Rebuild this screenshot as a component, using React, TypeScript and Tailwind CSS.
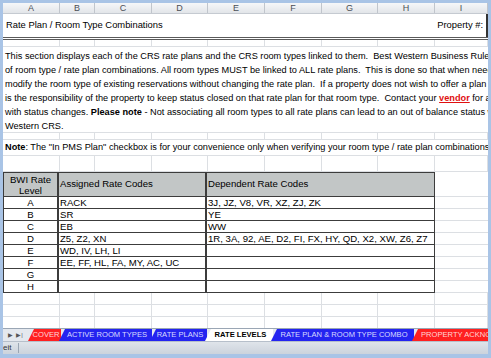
import React from 'react';

const cols = [57, 35, 57, 56, 57, 57, 56, 57, 53];
const letters = ['A', 'B', 'C', 'D', 'E', 'F', 'G', 'H', 'I'];

// one empty spreadsheet row with light gridlines
const BlankRow = ({ h }: { h: string }) => (
  <div className={`flex ${h} border-b border-[#dcdfe3]`}>
    {cols.map((w, i) => (
      <div key={i} style={{ width: w }} className="shrink-0 border-r border-[#dcdfe3]" />
    ))}
  </div>
);

const levels: [string, string, string][] = [
  ['A', 'RACK', '3J, JZ, V8, VR, XZ, ZJ, ZK'],
  ['B', 'SR', 'YE'],
  ['C', 'EB', 'WW'],
  ['D', 'Z5, Z2, XN', '1R, 3A, 92, AE, D2, FI, FX, HY, QD, X2, XW, Z6, Z7'],
  ['E', 'WD, IV, LH, LI', ''],
  ['F', 'EE, FF, HL, FA, MY, AC, UC', ''],
  ['G', '', ''],
  ['H', '', ''],
];

const tabs = [
  { label: 'COVER', cls: 'w-[33px] bg-[#ff2020] text-[#ffd6d6] justify-center' },
  { label: 'ACTIVE ROOM TYPES', cls: 'w-[93px] bg-[#2424f0] text-[#d8dcff] justify-center' },
  { label: 'RATE PLANS', cls: 'w-[57px] bg-[#2424f0] text-[#d8dcff] justify-center' },
  { label: 'RATE LEVELS', cls: 'w-[68px] bg-white text-black font-bold justify-center' },
  { label: 'RATE PLAN & ROOM TYPE COMBO', cls: 'w-[143px] bg-[#2424f0] text-[#d8dcff] justify-center' },
  { label: 'PROPERTY ACKNOWLEDGEMENT', cls: 'w-[80px] bg-[#ff2020] text-[#ffd6d6] justify-start pl-[6px]' },
];

const App = () => {
  return (
    <div className="w-[491px] h-[358px] bg-[#a9c4e6] pt-[3px] pl-[3px] pr-[3px] pb-[4px] font-['Liberation_Sans',Arial,sans-serif] text-black overflow-hidden">
      <div className="w-[485px] h-[351px] bg-white flex flex-col overflow-hidden">
        {/* column headers */}
        <div className="flex h-[11px] shrink-0 bg-gradient-to-b from-[#f6f7f9] to-[#e2e5e9] border-b border-[#c5cad1]">
          {cols.map((w, i) => (
            <div
              key={i}
              style={{ width: w }}
              className="shrink-0 border-r border-[#c0c5cc] flex items-center justify-center text-[9px] leading-none text-[#4a4f56]"
            >
              {letters[i]}
            </div>
          ))}
        </div>

        {/* title row */}
        <div className="flex h-[26px] shrink-0 border-b-[3px] border-double border-[#5a5a5a]">
          <div className="flex-1 flex items-center justify-between pl-[3px] pr-[3px] text-[9.4px] border-r-2 border-[#333]">
            <span>Rate Plan / Room Type Combinations</span>
            <span>Property #:</span>
          </div>
        </div>

        <BlankRow h="h-[7px]" />

        {/* description */}
        <div className="h-[86px] shrink-0 border-b border-[#dcdfe3] pl-[2px] pt-[2px] text-[9.2px] leading-[14px] whitespace-nowrap overflow-hidden">
          <div>This section displays each of the CRS rate plans and the CRS room types linked to them.&nbsp; Best Western Business Rules require a full matrix</div>
          <div>of room type / rate plan combinations. All room types MUST be linked to ALL rate plans.&nbsp; This is done so that when needed, properties can</div>
          <div>modify the room type of existing reservations without changing the rate plan.&nbsp; If a property does not wish to offer a plan for a room type, it</div>
          <div>
            is the responsibility of the property to keep status closed on that rate plan for that room type.&nbsp; Contact your{' '}
            <span className="font-bold text-[#e01010] underline">vendor</span> for assistance
          </div>
          <div>
            with status changes. <span className="font-bold">Please note</span> - Not associating all room types to all rate plans can lead to an out of balance status with Best
          </div>
          <div>Western CRS.</div>
        </div>

        <BlankRow h="h-[7px]" />

        {/* note */}
        <div className="h-[16px] shrink-0 border-b border-[#dcdfe3] pl-[2px] flex items-center text-[9.2px] whitespace-nowrap overflow-hidden">
          <span>
            <span className="font-bold">Note</span>: The "In PMS Plan" checkbox is for your convenience only when verifying your room type / rate plan combinations.
          </span>
        </div>

        <BlankRow h="h-[16px]" />

        {/* rate level table */}
        <div className="flex shrink-0">
          <div className="w-[432px] shrink-0 border-t border-l border-[#3c3c3c] text-[9.6px]">
            <div className="flex h-[24px] bg-[#c2c6c6] border-b border-[#3c3c3c]">
              <div className="w-[55px] shrink-0 border-r-2 border-[#3c3c3c] flex flex-col items-center justify-center leading-[11px] pt-[1px]">
                <span>BWI Rate</span>
                <span>Level</span>
              </div>
              <div className="w-[148px] shrink-0 border-r-2 border-[#3c3c3c] flex items-center pl-[1px]">Assigned Rate Codes</div>
              <div className="flex-1 border-r border-[#3c3c3c] flex items-center pl-[1px]">Dependent Rate Codes</div>
            </div>
            {levels.map(([lvl, assigned, dependent]) => (
              <div key={lvl} className="flex h-[12px] border-b border-[#3c3c3c] leading-[11px]">
                <div className="w-[55px] shrink-0 border-r-2 border-[#3c3c3c] text-center">{lvl}</div>
                <div className="w-[148px] shrink-0 border-r-2 border-[#3c3c3c] pl-[1px] whitespace-nowrap overflow-hidden">{assigned}</div>
                <div className="flex-1 border-r border-[#3c3c3c] pl-[1px] whitespace-nowrap overflow-hidden">{dependent}</div>
              </div>
            ))}
          </div>
          <div className="flex-1 flex flex-col">
            <div className="h-[25px] border-b border-[#dcdfe3]" />
            {levels.map(([lvl]) => (
              <div key={lvl} className="h-[12px] border-b border-[#dcdfe3]" />
            ))}
          </div>
        </div>

        <BlankRow h="h-[12px]" />
        <BlankRow h="h-[12px]" />
        <div className="flex-1 flex">
          {cols.map((w, i) => (
            <div key={i} style={{ width: w }} className="shrink-0 border-r border-[#dcdfe3]" />
          ))}
        </div>

        {/* sheet tabs */}
        <div className="h-[13px] shrink-0 flex items-stretch bg-[#e4e8ee] border-t border-[#9aa6b4]">
          <div className="w-[25px] shrink-0 flex items-center justify-center gap-[3px] text-[6px] text-[#555]">
            <span>▶</span>
            <span>▶|</span>
          </div>
          <div className="flex items-stretch">
            {tabs.map((t) => (
              <div
                key={t.label}
                className={`${t.cls} shrink-0 -mr-[2px] flex items-center text-[7.6px] leading-none whitespace-nowrap overflow-hidden [clip-path:polygon(6px_0,100%_0,100%_100%,0_100%)]`}
              >
                <span className="pl-[3px]">{t.label}</span>
              </div>
            ))}
          </div>
        </div>

        {/* status bar */}
        <div className="h-[13px] shrink-0 flex items-center bg-gradient-to-b from-[#dfe4ea] to-[#ccd3dc] border-t border-[#b6bfca]">
          <span className="w-[16px] text-[8px] text-[#333] border-r border-[#9aa6b4] leading-[10px]">eit</span>
        </div>
      </div>
    </div>
  );
};

export default App;
